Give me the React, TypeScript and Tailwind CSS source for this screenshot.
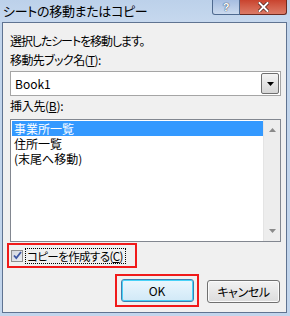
export default function App() {
  return (
    <div className="w-[290px] h-[316px] bg-[#c2d5ec] overflow-hidden text-black font-['Noto_Sans_CJK_JP','Liberation_Sans',sans-serif] [font-feature-settings:'palt']">
      {/* title bar */}
      <div className="h-[22px] flex items-start bg-gradient-to-b from-[#bcd1ea] to-[#c6d8ee]">
        <span className="pl-[3px] pt-[2px] text-[13px] leading-[18px] tracking-[-0.3px]">シートの移動またはコピー</span>
        <div className="ml-auto mr-[3px] flex">
          <div className="w-[28px] h-[15px] rounded-bl-[3px] border border-t-0 border-[#4f6a8f] bg-gradient-to-b from-[#a6bde0] to-[#cbdaee] flex items-center justify-center">
            <span className="text-[11px] leading-[13px] font-bold text-white font-['Liberation_Sans',sans-serif] [text-shadow:0_0_1px_#2a3d5c,0_0_1px_#2a3d5c]">?</span>
          </div>
          <div className="w-[47px] h-[15px] rounded-br-[3px] border border-l-0 border-t-0 border-[#6b2a20] bg-gradient-to-b from-[#c9432e] to-[#dc7a66] flex items-center justify-center">
            <svg width="11" height="10" viewBox="0 0 11 10">
              <path d="M1.5 1l8 8M9.5 1l-8 8" stroke="#4a1b12" strokeWidth="3.4" strokeLinecap="square" />
              <path d="M1.5 1l8 8M9.5 1l-8 8" stroke="#fff" strokeWidth="2" strokeLinecap="square" />
            </svg>
          </div>
        </div>
      </div>

      {/* dialog body */}
      <div className="ml-[2px] w-[285px] h-[291px] border border-[#5f7391] bg-[#f0f0f0] pl-[7px] pr-[5px] flex flex-col text-[12px]">
        <div className="mt-[10px] h-[16px] leading-[16px] tracking-[-1.1px]">選択したシートを移動します。</div>
        <div className="mt-[3px] h-[16px] leading-[16px] tracking-[-0.6px]">
          移動先ブック名(<span className="underline">T</span>):
        </div>

        {/* combo box */}
        <div className="mt-[3px] h-[25px] border border-[#a5a5a5] bg-white flex items-stretch">
          <span className="flex-1 pl-[4px] leading-[23px] text-[12px]">Book1</span>
          <div className="w-[18px] my-[1px] mr-[1px] border border-[#6f6f6f] rounded-[2px] bg-gradient-to-b from-[#f4f4f4] to-[#d6d6d6] flex items-center justify-center">
            <svg width="7" height="4" viewBox="0 0 7 4"><path d="M0 0h7L3.5 4z" fill="#000" /></svg>
          </div>
        </div>

        <div className="mt-[2px] h-[16px] leading-[16px] tracking-[-0.3px]">
          挿入先(<span className="underline">B</span>):
        </div>

        {/* list box */}
        <div className="mt-[5px] h-[123px] border border-[#828790] bg-white flex">
          <div className="flex-1 pt-[1px] pl-[1px] text-[12px] leading-[15px]">
            <div className="h-[15px] bg-[#3399ff] text-white pl-[2px]">事業所一覧</div>
            <div className="h-[15px] pl-[2px]">住所一覧</div>
            <div className="h-[15px] pl-[2px]">(末尾へ移動)</div>
          </div>
          <div className="w-[17px] bg-[#ededed] border-l border-[#e4e4e4] flex flex-col items-center justify-between py-[8px]">
            <svg width="7" height="4" viewBox="0 0 7 4"><path d="M3.5 0L7 4H0z" fill="#8a8a8a" /></svg>
            <svg width="7" height="4" viewBox="0 0 7 4"><path d="M0 0h7L3.5 4z" fill="#8a8a8a" /></svg>
          </div>
        </div>

        {/* checkbox (annotated) */}
        <div className="-ml-[3px] mt-[1px] w-[130px] h-[25px] border-2 border-[#f01a1a] flex items-center pl-[2px]">
          <div className="shrink-0 w-[12px] h-[12px] border border-[#8f8f8f] bg-gradient-to-br from-[#d4d6de] to-[#eceef4] flex items-center justify-center">
            <svg width="9" height="9" viewBox="0 0 9 9"><path d="M1 4.5l2.3 2.6L8 1" stroke="#3d56a3" strokeWidth="1.8" fill="none" /></svg>
          </div>
          <div className="shrink-0 whitespace-nowrap ml-[2px] w-[101px] h-[16px] border border-dotted border-black pl-[1px] text-[11.5px] leading-[14px] tracking-[-0.6px]">
            コピーを作成する(<span className="underline">C</span>)
          </div>
        </div>

        {/* buttons */}
        <div className="mt-[6px] flex items-start">
          <div className="ml-[105px] w-[84px] h-[33px] border-2 border-[#f01a1a] flex items-center justify-center">
            <div className="w-[73px] h-[23px] rounded-[3px] border border-[#3c7fb1] bg-gradient-to-b from-[#eaf6fd] to-[#d1e9f7] shadow-[inset_0_0_0_1px_#48d2f8] flex items-center justify-center text-[12px]">
              OK
            </div>
          </div>
          <div className="ml-[8px] mt-[6px] w-[73px] h-[23px] rounded-[3px] border border-[#707070] bg-gradient-to-b from-[#f2f2f2] to-[#dcdcdc] shadow-[inset_0_0_0_1px_#fbfbfb] flex items-center justify-center text-[12px] tracking-[-0.4px]">
            キャンセル
          </div>
        </div>
      </div>
    </div>
  );
}
